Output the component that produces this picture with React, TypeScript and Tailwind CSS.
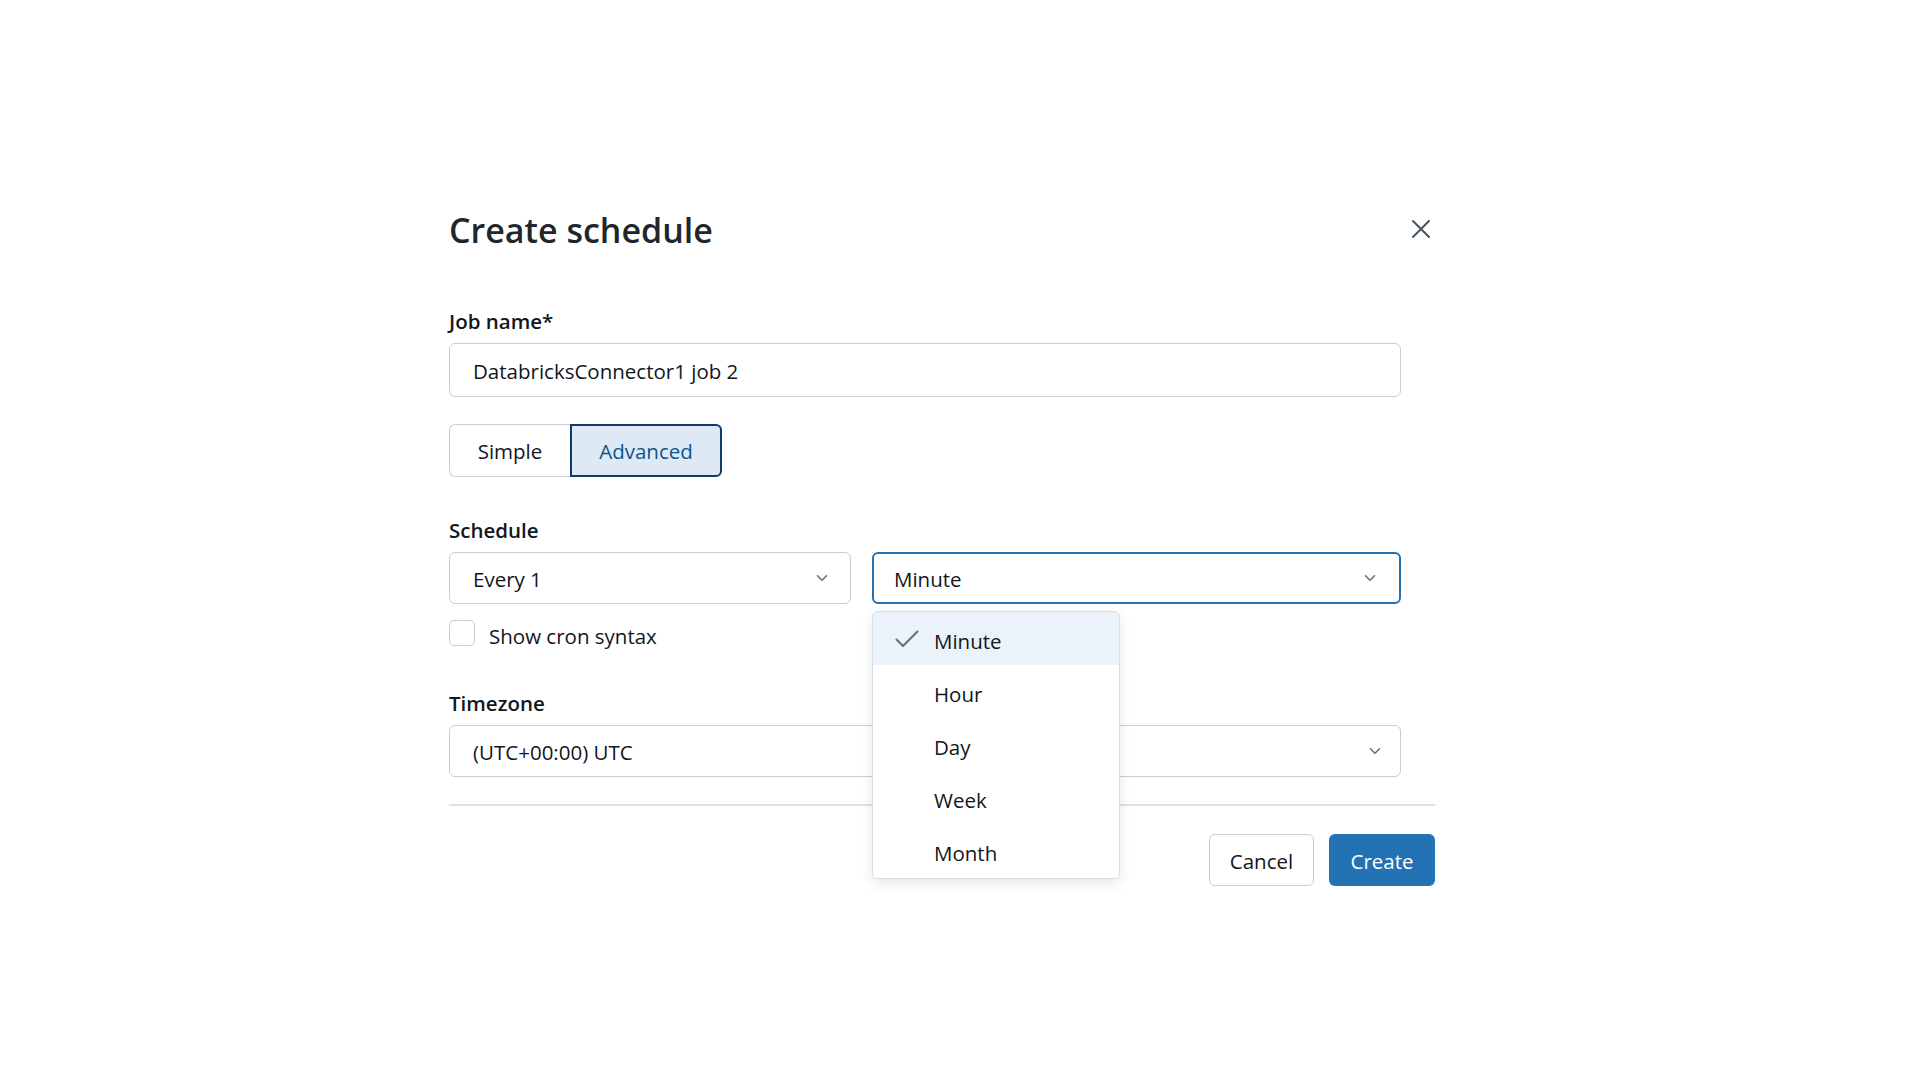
function Chevron() {
  return (
    <svg width="12" height="8" viewBox="0 0 12 8" fill="none">
      <path d="M1.5 1.8 6 6.2l4.5-4.4" stroke="#5f7281" strokeWidth="1.6" strokeLinecap="round" strokeLinejoin="round" />
    </svg>
  );
}

function CheckMark() {
  return (
    <svg width="24" height="18" viewBox="0 0 24 18" fill="none">
      <path d="M1.5 9.5 8 16 22.5 1.5" stroke="#5f7281" strokeWidth="2" strokeLinecap="round" strokeLinejoin="round" />
    </svg>
  );
}

const options = ["Minute", "Hour", "Day", "Week", "Month"];

export default function App() {
  return (
    <div className="relative h-[100vh] w-full bg-white font-['Open_Sans',sans-serif] text-[#11171c]">
      <div className="pt-[210px] pl-[449px]">
        <div className="w-[986px]">
          {/* header */}
          <div className="flex items-start justify-between">
            <h2 className="text-[34px] leading-[40px] font-semibold text-[#1f272d]">Create schedule</h2>
            <button className="mt-[9px] mr-[4px] h-[20px] w-[20px]">
              <svg width="20" height="20" viewBox="0 0 20 20" fill="none">
                <path d="M2 2l16 16M18 2 2 18" stroke="#445461" strokeWidth="2" strokeLinecap="round" />
              </svg>
            </button>
          </div>

          <div className="w-[952px]">
            {/* job name */}
            <div className="mt-[59px] text-[20.5px] leading-[24px] font-semibold">Job name*</div>
            <div className="mt-[10px] flex h-[54px] items-center rounded-[6px] border border-[#c4cfd9] pl-[23px] pt-[2px] text-[20.5px] leading-[24px]">
              DatabricksConnector1 job 2
            </div>

            {/* toggle */}
            <div className="mt-[27px] flex h-[53px] text-[20.5px] leading-[24px]">
              <button className="w-[121px] rounded-l-[6px] border border-r-0 border-[#c4cfd9] pt-[1px] text-[#11171c]">
                Simple
              </button>
              <button className="w-[152px] rounded-r-[6px] border-2 border-[#0e3d6b] bg-[#dde9f4] pt-[1px] text-[#0e538b]">
                Advanced
              </button>
            </div>

            {/* schedule */}
            <div className="mt-[41px] text-[20.5px] leading-[24px] font-semibold">Schedule</div>
            <div className="mt-[10px] flex gap-[21px] text-[20.5px] leading-[24px]">
              <div className="flex h-[52px] w-[402px] items-center justify-between rounded-[6px] border border-[#c4cfd9] pl-[23px] pr-[22px]">
                <span className="pt-[2px]">Every 1</span>
                <Chevron />
              </div>
              <div className="relative flex-1">
                <div className="flex h-[52px] items-center justify-between rounded-[6px] border-2 border-[#2272b4] pl-[20px] pr-[23px]">
                  <span className="pt-[2px]">Minute</span>
                  <Chevron />
                </div>
                <div className="absolute left-0 top-[59px] z-10 w-[248px] overflow-hidden rounded-[6px] border border-[#d5dde5] bg-white shadow-[0_4px_14px_rgba(0,0,0,0.10)]">
                  {options.map((o, i) => (
                    <div
                      key={o}
                      className={
                        "flex h-[53.2px] items-center pl-[22px] " + (i === 0 ? "bg-[#ebf2f9]" : "bg-white")
                      }
                    >
                      <div className="flex w-[39px] items-center">{i === 0 ? <CheckMark /> : null}</div>
                      <span className="pt-[4px]">{o}</span>
                    </div>
                  ))}
                </div>
              </div>
            </div>

            {/* cron checkbox */}
            <div className="mt-[16px] flex items-start gap-[14px] text-[20.5px] leading-[24px]">
              <div className="h-[26px] w-[26px] rounded-[5px] border border-[#c4cfd9] bg-white"></div>
              <span className="mt-[4px]">Show cron syntax</span>
            </div>

            {/* timezone */}
            <div className="mt-[43px] text-[20.5px] leading-[24px] font-semibold">Timezone</div>
            <div className="mt-[10px] flex h-[52px] items-center justify-between rounded-[6px] border border-[#c4cfd9] pl-[23px] pr-[19px] text-[20.5px] leading-[24px]">
              <span className="pt-[2px]">(UTC+00:00) UTC</span>
              <Chevron />
            </div>
          </div>

          {/* footer */}
          <div className="mt-[27px] h-[2px] bg-[#dbe2e8]"></div>
          <div className="mt-[28px] flex justify-end gap-[15px] text-[20.5px] leading-[24px]">
            <button className="h-[52px] w-[105px] rounded-[6px] border border-[#c4cfd9] bg-white pt-[1px] text-[#11171c]">
              Cancel
            </button>
            <button className="h-[52px] w-[106px] rounded-[6px] bg-[#2272b4] pt-[1px] text-white">Create</button>
          </div>
        </div>
      </div>
    </div>
  );
}
